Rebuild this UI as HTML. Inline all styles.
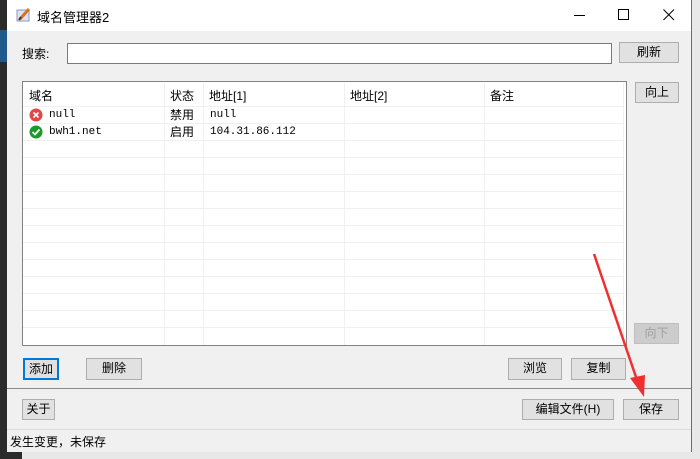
<html><head><style>
body{margin:0;width:700px;height:459px;overflow:hidden;background:#e8e8e8;position:relative;font-family:"Liberation Sans","Noto Sans CJK SC",sans-serif;font-size:12px;color:#000}
.a{position:absolute}
.btn{position:absolute;background:#e1e1e1;border:1px solid #adadad;box-sizing:border-box;text-align:center;font-size:12px;line-height:19px}
.c{position:absolute;top:83px;height:262px;border-left:1px solid #f0f0f0}
.r{position:absolute;left:23px;width:601px;border-top:1px solid #f0f0f0}
.t{position:absolute;font-size:12px}
.m{font-family:"Liberation Mono","Noto Sans CJK SC",monospace;font-size:11px}
</style></head><body>
<div class="a" style="left:0;top:0;width:7px;height:459px;background:#2b2b2b"></div>
<div class="a" style="left:0;top:30px;width:7px;height:32px;background:#1e5a8c"></div>
<div class="a" style="left:0;top:452px;width:22px;height:7px;background:#2b2b2b"></div>
<div class="a" style="left:7px;top:0;width:685px;height:452px;background:#f0f0f0;border-right:1px solid #1883d7;box-sizing:border-box"></div>
<div class="a" style="left:7px;top:0;width:684px;height:31px;background:#fff"></div>
<svg class="a" style="left:15px;top:6px" width="18" height="18"><rect x="2" y="4" width="12" height="11" fill="#dde4f0" stroke="#8899bb"/><path d="M5 13 L14 3" stroke="#e07020" stroke-width="3"/><path d="M4 14 L6 11" stroke="#333" stroke-width="2"/></svg>
<div class="t" style="left:37px;top:7px;font-size:13px">域名管理器2</div>
<div class="a" style="left:574px;top:15px;width:11px;border-top:1px solid #000"></div>
<div class="a" style="left:618px;top:9px;width:9px;height:9px;border:1px solid #000"></div>
<svg class="a" style="left:663px;top:9px" width="12" height="12"><path d="M0.5 0.5L11 11M11 0.5L0.5 11" stroke="#000"/></svg>
<div class="t" style="left:22px;top:45px">搜索:</div>
<div class="a" style="left:67px;top:43px;width:545px;height:21px;background:#fff;border:1px solid #7a7a7a;box-sizing:border-box"></div>
<div class="btn" style="left:619px;top:42px;width:60px;height:21px">刷新</div>
<div class="a" style="left:22px;top:81px;width:605px;height:265px;background:#fff;border:1px solid #828282;box-sizing:border-box"></div>
<div class="c" style="left:164px"></div><div class="c" style="left:203px"></div><div class="c" style="left:344px"></div><div class="c" style="left:484px"></div><div class="c" style="left:623px"></div>
<div class="r" style="top:106px"></div><div class="r" style="top:123px"></div><div class="r" style="top:140px"></div><div class="r" style="top:157px"></div><div class="r" style="top:174px"></div><div class="r" style="top:191px"></div><div class="r" style="top:208px"></div><div class="r" style="top:225px"></div><div class="r" style="top:242px"></div><div class="r" style="top:259px"></div><div class="r" style="top:276px"></div><div class="r" style="top:293px"></div><div class="r" style="top:310px"></div><div class="r" style="top:327px"></div>
<div class="t" style="left:29px;top:87px">域名</div><div class="t" style="left:170px;top:87px">状态</div><div class="t" style="left:209px;top:87px">地址[1]</div><div class="t" style="left:350px;top:87px">地址[2]</div><div class="t" style="left:490px;top:87px">备注</div>
<svg class="a" style="left:29px;top:108px" width="14" height="14"><circle cx="7" cy="7" r="6.5" fill="#e04848"/><path d="M4.5 4.5L9.5 9.5M9.5 4.5L4.5 9.5" stroke="#fff" stroke-width="1.6"/></svg>
<svg class="a" style="left:29px;top:125px" width="14" height="14"><circle cx="7" cy="7" r="6.5" fill="#1a9a2a"/><path d="M3.5 7L6 9.5L10.5 4.5" stroke="#fff" stroke-width="1.8" fill="none"/></svg>
<div class="t m" style="left:49px;top:109px">null</div><div class="t" style="left:170px;top:106px">禁用</div><div class="t m" style="left:210px;top:109px">null</div>
<div class="t m" style="left:49px;top:126px">bwh1.net</div><div class="t" style="left:170px;top:123px">启用</div><div class="t m" style="left:210px;top:126px">104.31.86.112</div>
<div class="btn" style="left:635px;top:82px;width:44px;height:21px">向上</div>
<div class="btn" style="left:634px;top:323px;width:45px;height:21px;background:#ccc;border-color:#bfbfbf;color:#a0a0a0">向下</div>
<div class="btn" style="left:23px;top:358px;width:36px;height:22px;border:2px solid #0078d7;line-height:18px">添加</div>
<div class="btn" style="left:86px;top:358px;width:56px;height:22px">删除</div>
<div class="btn" style="left:508px;top:358px;width:54px;height:22px">浏览</div>
<div class="btn" style="left:571px;top:358px;width:55px;height:22px">复制</div>
<div class="a" style="left:7px;top:388px;width:684px;border-top:1px solid #8a8a8a"></div>
<div class="btn" style="left:22px;top:399px;width:33px;height:21px">关于</div>
<div class="btn" style="left:522px;top:399px;width:92px;height:21px">编辑文件(H)</div>
<div class="btn" style="left:623px;top:399px;width:56px;height:21px">保存</div>
<div class="a" style="left:7px;top:429px;width:684px;border-top:1px solid #dcdcdc"></div>
<div class="t" style="left:10px;top:433px">发生变更，未保存</div>
<svg class="a" style="left:0;top:0" width="700" height="459"><path d="M594 254L637 380" stroke="#f03030" stroke-width="2.5"/><path d="M630 378L644 397L645 375Z" fill="#f03030"/></svg>
</body></html>
